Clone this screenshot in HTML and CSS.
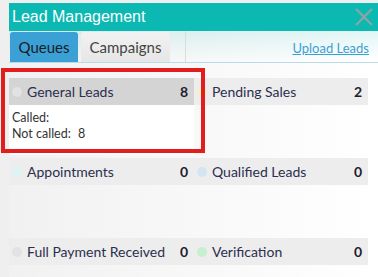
FILE: index.html
```html
<!DOCTYPE html>
<html lang="en">
<head>
    <meta charset="UTF-8">
    <meta name="viewport" content="width=device-width, initial-scale=1.0">
    <title>Lead Management</title>
    <link rel="stylesheet" href="styles.css">
</head>
<body>

    <!-- Window -->
    <div class="window">
        <div class="titlebar">
            <span class="title">Lead Management</span>
            <svg class="close" width="18" height="18" viewBox="0 0 18 18">
                <path d="M1 1 L17 17 M17 1 L1 17" stroke="#8fa3a3" stroke-width="2.2" fill="none"/>
            </svg>
        </div>

        <div class="panel">
            <!-- Tabs -->
            <div class="tabbar">
                <a class="tab active" href="#">Queues</a>
                <a class="tab" href="#">Campaigns</a>
                <div class="tab-fill"></div>
                <a class="upload" href="#">Upload Leads</a>
            </div>

            <!-- Queues -->
            <div class="queues">
                <div class="queue selected">
                    <div class="queue-head">
                        <span class="dot dot-gray"></span>
                        <span class="queue-name">General Leads</span>
                        <span class="queue-count">8</span>
                    </div>
                    <div class="queue-body">
                        <div>Called:</div>
                        <div>Not called: <span class="num">8</span></div>
                    </div>
                </div>
                <div class="queue">
                    <div class="queue-head">
                        <span class="dot dot-yellow"></span>
                        <span class="queue-name">Pending Sales</span>
                        <span class="queue-count">2</span>
                    </div>
                </div>
                <div class="queue">
                    <div class="queue-head">
                        <span class="dot dot-cyan"></span>
                        <span class="queue-name">Appointments</span>
                        <span class="queue-count">0</span>
                    </div>
                </div>
                <div class="queue">
                    <div class="queue-head">
                        <span class="dot dot-blue"></span>
                        <span class="queue-name">Qualified Leads</span>
                        <span class="queue-count">0</span>
                    </div>
                </div>
                <div class="queue">
                    <div class="queue-head">
                        <span class="dot dot-gray"></span>
                        <span class="queue-name">Full Payment Received</span>
                        <span class="queue-count">0</span>
                    </div>
                </div>
                <div class="queue">
                    <div class="queue-head">
                        <span class="dot dot-green"></span>
                        <span class="queue-name">Verification</span>
                        <span class="queue-count">0</span>
                    </div>
                </div>
            </div>
        </div>
    </div>

    <!-- Highlight box -->
    <div class="highlight"></div>

</body>
</html>
```

FILE: styles.css
```css
body {
    margin: 0;
    padding: 0;
    height: 277px;
    background-color: #efefef;
    font-family: "Lato", "Open Sans", sans-serif;
    overflow: hidden;
}
.window {
    margin: 3px 0 0 9px;
    width: 369px;
    height: 274px;
    overflow: hidden;
    background: linear-gradient(to right, #f1f1f1, #ffffff);
}
.titlebar {
    height: 28px;
    background-color: #0bb8b2;
    display: flex;
    align-items: center;
    justify-content: space-between;
    padding: 0 5px 0 3px;
}
.title {
    color: white;
    font-family: "Liberation Sans", Arial, sans-serif;
    font-size: 16px;
}
.close {
    display: block;
}
.panel {
    background: linear-gradient(to bottom, rgba(11, 184, 178, 0.12), rgba(255, 255, 255, 0) 30px);
}
.tabbar {
    display: flex;
    align-items: flex-end;
    height: 32px;
    padding: 0 9px 0 1px;
    border-bottom: 1px solid #b9dbe8;
    box-sizing: border-box;
}
.tab {
    display: block;
    height: 30px;
    line-height: 30px;
    text-align: center;
    font-size: 15px;
    color: #444;
    text-decoration: none;
    border-radius: 3px 3px 0 0;
    background: linear-gradient(to bottom, #f2f2f2, #e6e6e6);
    margin-right: 3px;
}
.tab.active {
    width: 68px;
    background: #3aa0d6;
    color: #1c1c1c;
}
.tab:not(.active) {
    width: 89px;
}
.tab-fill {
    flex: 1;
    align-self: stretch;
    border-right: 1px solid #dcdcdc;
    margin-right: auto;
    max-width: 12px;
}
.upload {
    margin-left: auto;
    align-self: center;
    font-size: 13px;
    color: #3a9fd5;
    text-decoration: underline;
    margin-top: 2px;
}
.queues {
    display: grid;
    grid-template-columns: 185px 174px;
    grid-auto-rows: 80px;
    padding-top: 15px;
}
.queue-head {
    display: flex;
    align-items: center;
    height: 27px;
    background-color: #ededed;
    padding: 0 6px 0 3px;
    font-size: 14px;
    color: #2c2f4f;
}
.selected .queue-head {
    background-color: #d4d4d4;
}
.selected .queue-body {
    background-color: #fff;
    height: 45px;
}
.dot {
    width: 10px;
    height: 10px;
    border-radius: 50%;
    margin-right: 5px;
}
.dot-gray { background-color: #e2e2e2; }
.dot-yellow { background-color: #f4f0c8; }
.dot-cyan { background-color: #ddf3f4; }
.dot-blue { background-color: #d3e5f1; }
.dot-green { background-color: #c5efcf; }
.queue-name {
    flex: 1;
}
.queue-count {
    font-weight: bold;
    color: #1f1f2f;
}
.queue-body {
    padding: 5px 0 0 3px;
    font-size: 12.5px;
    line-height: 16px;
    color: #333;
}
.queue-body .num {
    margin-left: 4px;
}
.highlight {
    position: absolute;
    left: 1px;
    top: 68px;
    width: 204px;
    height: 85px;
    border: 4px solid #e21d1d;
    box-sizing: border-box;
}
```
